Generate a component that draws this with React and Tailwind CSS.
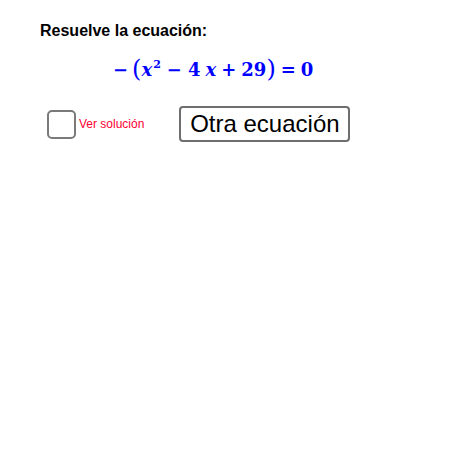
import React from 'react'

// Ecuación mostrada en azul, estilo fórmula
const Ecuacion = () => (
    <div className="flex items-center text-[#0000ff] font-bold leading-none" style={{ fontFamily: '"DejaVu Serif", serif' }}>
        <span className="text-[18px]">−</span>
        <span className="text-[24px] font-normal ml-[4px] -mt-[2px]">(</span>
        <span className="text-[18px] italic">x</span>
        <span className="text-[11px] -mt-[11px] ml-[1px]">2</span>
        <span className="text-[18px] ml-[6px]">−</span>
        <span className="text-[18px] ml-[6px]">4</span>
        <span className="text-[18px] italic ml-[5px]">x</span>
        <span className="text-[18px] ml-[5px]">+</span>
        <span className="text-[18px] ml-[5px]">29</span>
        <span className="text-[24px] font-normal -mt-[2px]">)</span>
        <span className="text-[18px] ml-[5px]">=</span>
        <span className="text-[18px] ml-[5px]">0</span>
    </div>
)

export default function App() {
    return (
        <div className="w-[449px] h-[451px] bg-white" style={{ fontFamily: '"Liberation Sans", Arial, sans-serif' }}>
            <div className="pt-[22px] pl-[40px]">
                <h1 className="text-[16px] font-bold text-black leading-[18px]">Resuelve la ecuación:</h1>
            </div>

            <div className="pl-[113px] mt-[18px] h-[24px] flex items-center">
                <Ecuacion />
            </div>

            <div className="flex items-center mt-[24px] pl-[47px]">
                <label className="flex items-center gap-[3px]">
                    <span className="w-[29px] h-[29px] rounded-[5px] border-2 border-[#7a7a7a] bg-white" />
                    <span className="text-[12px] text-[#ff0033]">Ver solución</span>
                </label>
                <button className="ml-[35px] w-[171px] h-[36px] rounded-[4px] border-2 border-[#6e6e6e] bg-white text-[24px] text-black leading-none flex items-center justify-center">
                    Otra ecuación
                </button>
            </div>
        </div>
    )
}
